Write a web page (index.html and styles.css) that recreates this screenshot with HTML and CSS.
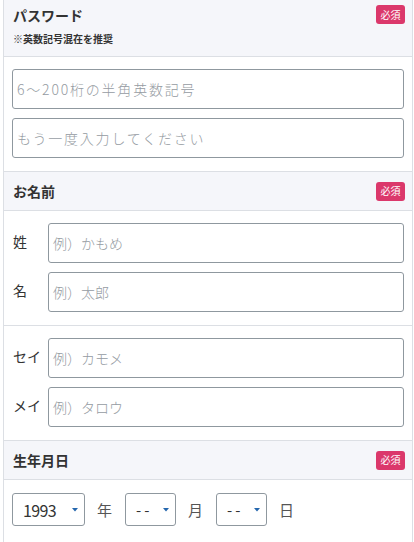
FILE: index.html
```html
<!DOCTYPE html>
<html lang="ja">
<head>
<meta charset="utf-8">
<title>会員登録</title>
<link rel="stylesheet" href="styles.css">
</head>
<body>
<div class="form">
  <div class="head head-tall">
    <div class="head-text">
      <div class="title">パスワード</div>
      <div class="note">※英数記号混在を推奨</div>
    </div>
    <span class="badge">必須</span>
  </div>
  <div class="body">
    <div class="field wide">6〜200桁の半角英数記号</div>
    <div class="field wide">もう一度入力してください</div>
  </div>

  <div class="head">
    <div class="title">お名前</div>
    <span class="badge">必須</span>
  </div>
  <div class="body">
    <div class="row"><span class="label">姓</span><div class="field">例）かもめ</div></div>
    <div class="row"><span class="label">名</span><div class="field">例）太郎</div></div>
  </div>
  <div class="body">
    <div class="row"><span class="label">セイ</span><div class="field">例）カモメ</div></div>
    <div class="row"><span class="label">メイ</span><div class="field">例）タロウ</div></div>
  </div>

  <div class="head">
    <div class="title">生年月日</div>
    <span class="badge">必須</span>
  </div>
  <div class="body body-date">
    <div class="date">
      <div class="select select-year"><span class="val num">1993</span><svg class="arrow" width="6" height="4" viewBox="0 0 6 4"><path d="M0 0H6L3 3.5Z" fill="#2466ad"/></svg></div>
      <span class="unit">年</span>
      <div class="select"><span class="val dash">--</span><svg class="arrow" width="6" height="4" viewBox="0 0 6 4"><path d="M0 0H6L3 3.5Z" fill="#2466ad"/></svg></div>
      <span class="unit">月</span>
      <div class="select"><span class="val dash">--</span><svg class="arrow" width="6" height="4" viewBox="0 0 6 4"><path d="M0 0H6L3 3.5Z" fill="#2466ad"/></svg></div>
      <span class="unit">日</span>
    </div>
  </div>
</div>
</body>
</html>
```

FILE: styles.css
```css
html, body {
  margin: 0;
  padding: 0;
  background: #fff;
}
body {
  font-family: "Noto Sans CJK JP", "Noto Sans", sans-serif;
  color: #333;
}
.form {
  margin: 0 1px 0 3px;
  border-left: 1px solid #dcdfe4;
  border-right: 1px solid #dcdfe4;
}
.head {
  background: #f5f6fa;
  border-bottom: 1px solid #dcdfe4;
  display: flex;
  align-items: center;
  justify-content: space-between;
  height: 38px;
  padding: 0 7px 0 9px;
}
.head-tall {
  height: 57px;
  align-items: flex-start;
  box-sizing: border-box;
  padding-top: 5px;
}
.title {
  font-size: 14px;
  font-weight: 700;
  line-height: 20px;
  color: #333;
}
.note {
  font-size: 10px;
  font-weight: 700;
  line-height: 14px;
  margin-top: 7px;
  color: #333;
}
.badge {
  display: inline-flex;
  align-items: center;
  justify-content: center;
  width: 29px;
  height: 19px;
  border-radius: 3px;
  background: #db386b;
  color: #fff;
  font-size: 10px;
  line-height: 1;
}
.body {
  border-bottom: 1px solid #dcdfe4;
  padding: 12px 8px 13px 8px;
  display: flex;
  flex-direction: column;
  gap: 9px;
}
.field {
  box-sizing: border-box;
  height: 40px;
  border: 1px solid #8f989f;
  border-radius: 3px;
  padding-left: 4px;
  display: flex;
  align-items: center;
  font-size: 14px;
  font-weight: 300;
  color: #959ba2;
  flex: none;
}
.row .field {
  flex: 1;
}
.wide {
  letter-spacing: 1.8px;
}
.row {
  display: flex;
  align-items: center;
}
.label {
  width: 36px;
  padding-left: 1px;
  box-sizing: border-box;
  font-size: 14px;
  color: #333;
  margin-top: -5px;
}
.body-date {
  padding-top: 13px;
  padding-bottom: 20px;
  border-bottom: none;
}
.date {
  display: flex;
  align-items: center;
}
.select {
  box-sizing: border-box;
  width: 51px;
  height: 33px;
  border: 1px solid #8f989f;
  border-radius: 3px;
  display: flex;
  align-items: center;
  justify-content: space-between;
  padding: 0 6px 0 10px;
}
.select-year {
  width: 73px;
}
.val {
  font-size: 15px;
  color: #333;
}
.dash {
  letter-spacing: 3px;
}
.num {
  font-size: 16px;
  letter-spacing: -0.6px;
}
.arrow {
  display: block;
}
.unit {
  font-size: 15px;
  color: #555;
  margin: 0 13px 0 12px;
}
```
